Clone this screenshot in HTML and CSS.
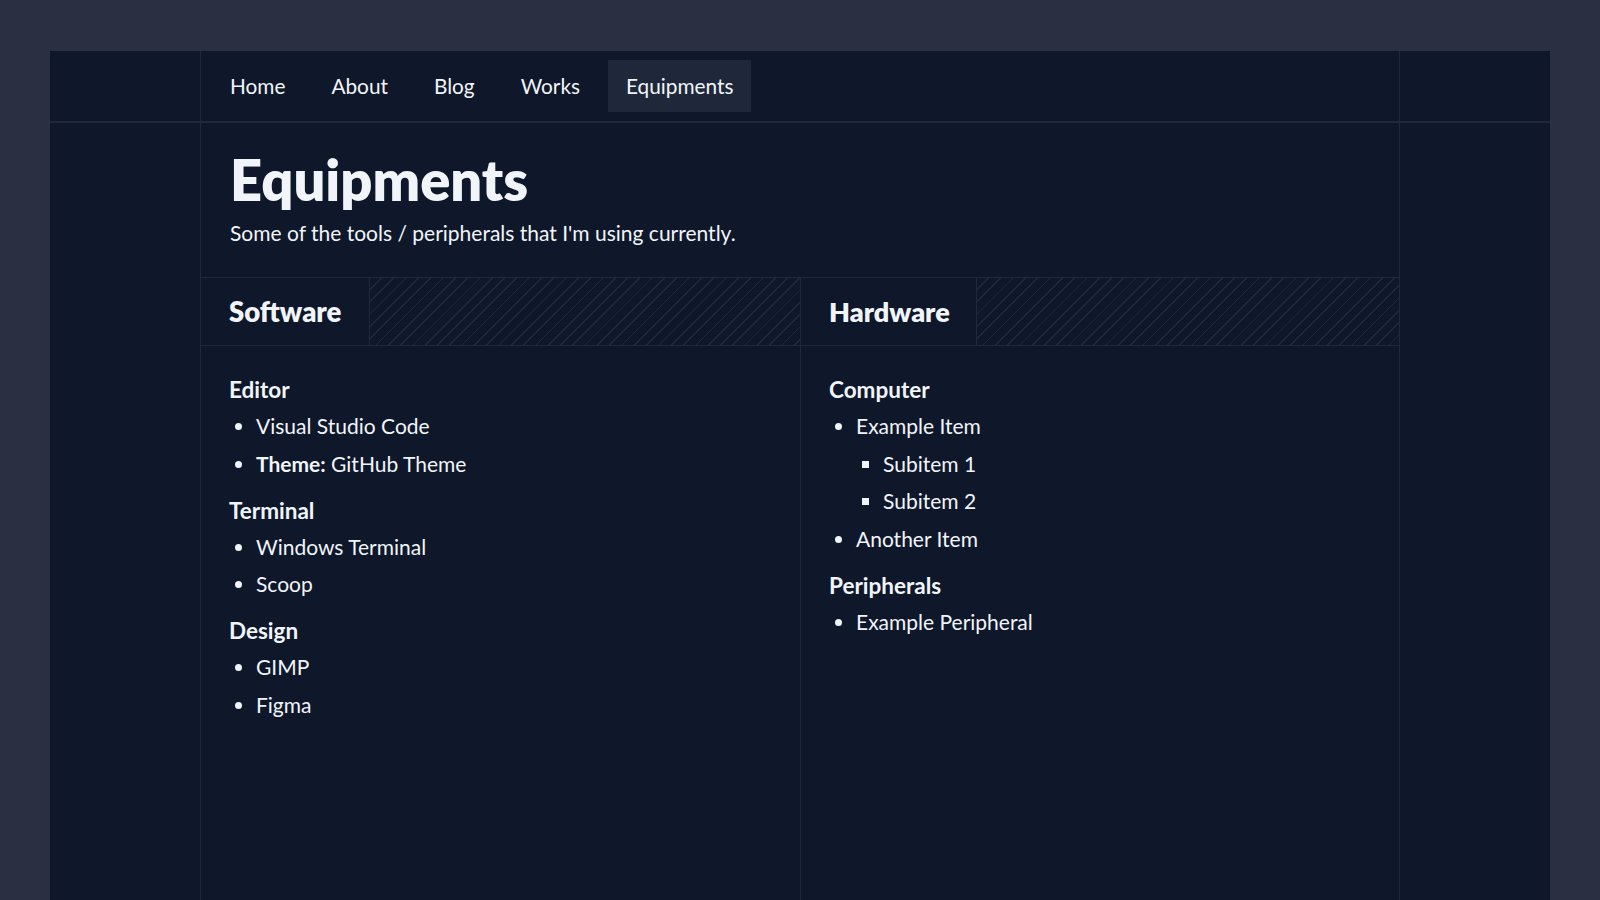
FILE: index.html
```html
<!DOCTYPE html>
<html lang="en">
<head>
    <meta charset="UTF-8">
    <meta name="viewport" content="width=device-width, initial-scale=1.0">
    <title>Equipments</title>
    <link rel="stylesheet" href="styles.css">
</head>
<body>
    <div class="frame">
        <header class="site-header">
            <nav class="container nav">
                <a href="#">Home</a>
                <a href="#">About</a>
                <a href="#">Blog</a>
                <a href="#">Works</a>
                <a href="#" class="active">Equipments</a>
            </nav>
        </header>
        <main class="container page">
            <div class="intro">
                <h1>Equipments</h1>
                <p>Some of the tools / peripherals that I'm using currently.</p>
            </div>
            <div class="columns">
                <section class="column">
                    <div class="column-head">
                        <h2>Software</h2>
                        <div class="stripes"></div>
                    </div>
                    <div class="column-body">
                        <h3>Editor</h3>
                        <ul>
                            <li>Visual Studio Code</li>
                            <li><b>Theme:</b> GitHub Theme</li>
                        </ul>
                        <h3>Terminal</h3>
                        <ul>
                            <li>Windows Terminal</li>
                            <li>Scoop</li>
                        </ul>
                        <h3>Design</h3>
                        <ul>
                            <li>GIMP</li>
                            <li>Figma</li>
                        </ul>
                    </div>
                </section>
                <section class="column">
                    <div class="column-head">
                        <h2>Hardware</h2>
                        <div class="stripes"></div>
                    </div>
                    <div class="column-body">
                        <h3>Computer</h3>
                        <ul>
                            <li>Example Item
                                <ul>
                                    <li>Subitem 1</li>
                                    <li>Subitem 2</li>
                                </ul>
                            </li>
                            <li>Another Item</li>
                        </ul>
                        <h3>Peripherals</h3>
                        <ul>
                            <li>Example Peripheral</li>
                        </ul>
                    </div>
                </section>
            </div>
        </main>
    </div>
</body>
</html>
```

FILE: styles.css
```css
html, body {
    height: 100%;
}

body {
    margin: 0;
    padding: 51px 50px 0;
    box-sizing: border-box;
    background-color: #2a3042;
    font-family: Lato, "Noto Sans", sans-serif;
    color: #f1f5f9;
    overflow: hidden;
}

.frame {
    height: 100%;
    display: flex;
    flex-direction: column;
    background-color: #0f172a;
}

.container {
    width: 1200px;
    margin: 0 auto;
    box-sizing: border-box;
    border-left: solid #1e293b 1px;
    border-right: solid #1e293b 1px;
}

.site-header {
    border-bottom: solid #1e293b 2px;
}

.nav {
    display: flex;
    gap: 10px;
    padding: 9px 11px;
}

.nav a {
    display: block;
    height: 52px;
    line-height: 52px;
    padding: 0 18px;
    font-size: 20.8px;
    color: #f1f5f9;
    text-decoration: none;
}

.nav a.active {
    background-color: #1f283a;
}

.page {
    flex: 1;
    display: flex;
    flex-direction: column;
}

.intro {
    padding: 26px 29px 30px;
}

.intro h1 {
    margin: 0;
    font-size: 56px;
    line-height: 62px;
    font-weight: 800;
}

.intro p {
    margin: 8px 0 0;
    font-size: 21px;
    line-height: 28px;
}

.columns {
    flex: 1;
    display: grid;
    grid-template-columns: 1fr 1fr;
    border-top: solid #1e293b 1px;
}

.column + .column {
    border-left: solid #1e293b 1px;
}

.column-head {
    display: flex;
    height: 67px;
    border-bottom: solid #1e293b 1px;
}

.column-head h2 {
    margin: 0;
    padding: 0 28px;
    font-size: 27.5px;
    line-height: 67px;
    font-weight: 800;
    border-right: solid #1e293b 1px;
}

.column + .column h2 {
    padding: 0 26px 0 28px;
    font-size: 27px;
}

.stripes {
    flex: 1;
    background-image: repeating-linear-gradient(135deg, transparent 0, transparent 7.5px, #1e293b 7.5px, #1e293b 8.7px);
}

.column-body {
    padding: 29px 28px;
}

.column-body h3 {
    margin: 0 0 6px;
    font-size: 22.5px;
    line-height: 30px;
    font-weight: 700;
}

.column-body ul {
    margin: 0 0 17px;
    padding-left: 27px;
}

.column-body li {
    font-size: 21px;
    line-height: 30px;
}

.column-body li + li {
    margin-top: 7.5px;
}

.column-body ul ul {
    margin: 7.5px 0 0;
    list-style: square;
}
```
